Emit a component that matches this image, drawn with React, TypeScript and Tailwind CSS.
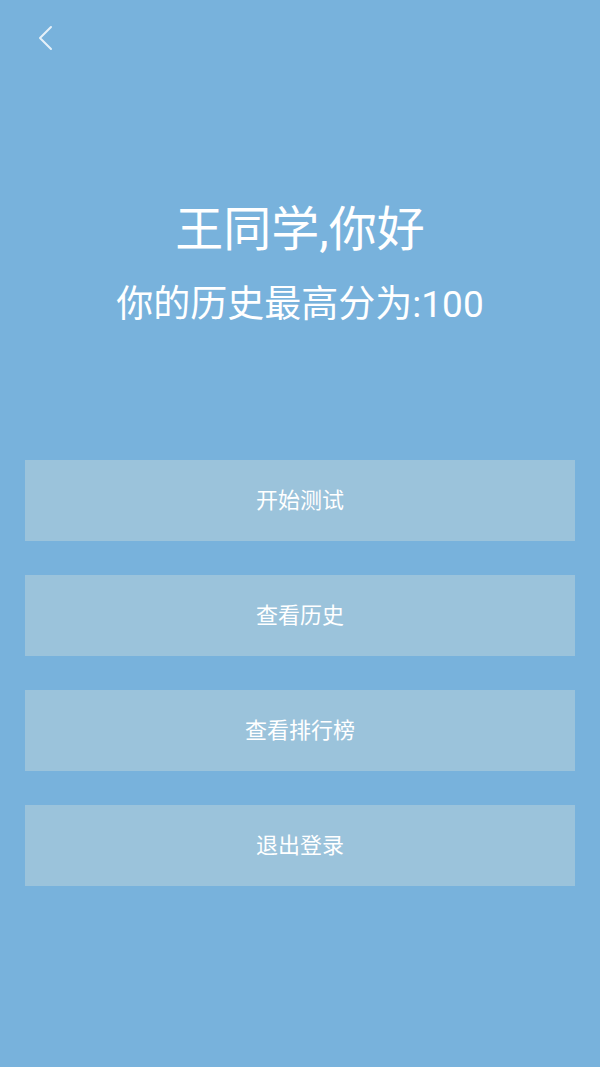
import React from "react";

const actions = ["开始测试", "查看历史", "查看排行榜", "退出登录"];

export default function App() {
  return (
    <div
      className="min-h-[1067px] w-full bg-[#78b2dc] text-white"
      style={{ fontFamily: 'Roboto, "Noto Sans CJK SC", "Noto Sans", sans-serif' }}
    >
      <div className="h-[75px] pl-[36px] pt-[25px]">
        <svg width="18" height="26" viewBox="0 0 18 26" fill="none">
          <path d="M15 2 L4 13 L15 24" stroke="#e6f0f8" strokeWidth="2" strokeLinecap="round" strokeLinejoin="round" />
        </svg>
      </div>
      <div className="mt-[127px] text-center text-[48px] leading-[56px]">王同学,你好</div>
      <div className="mt-[24px] text-center text-[37px] leading-[46px]">你的历史最高分为:100</div>
      <div className="mt-[132px] flex flex-col gap-[34px] px-[25px]">
        {actions.map((a) => (
          <button
            key={a}
            className="flex h-[81px] w-full items-center justify-center bg-[#9bc3db] text-[22px] text-white"
          >
            {a}
          </button>
        ))}
      </div>
    </div>
  );
}
